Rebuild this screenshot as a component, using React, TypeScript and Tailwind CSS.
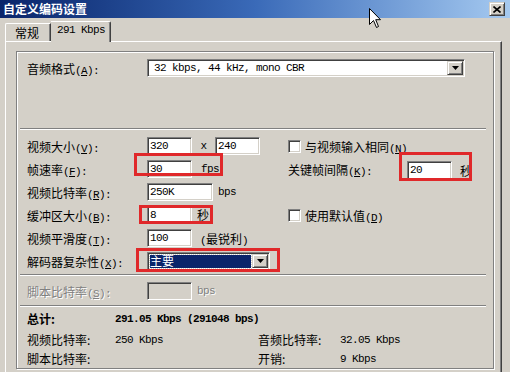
import React from 'react';

const ZH = "font-['Noto_Sans_CJK_SC',sans-serif] text-[12px]";
const EN = "font-['Liberation_Mono',monospace] text-[11px] tracking-[-0.6px]";
const SUNKEN =
  'border border-t-[#808080] border-l-[#808080] border-b-white border-r-white shadow-[inset_1px_1px_0_#404040,inset_-1px_-1px_0_#d4d0c8]';
const RAISED =
  'border border-t-[#d4d0c8] border-l-[#d4d0c8] border-b-[#404040] border-r-[#404040] shadow-[inset_1px_1px_0_white,inset_-1px_-1px_0_#808080]';

function Lbl({ zh, k, colon = true }: { zh: string; k: string; colon?: boolean }) {
  return (
    <span className="whitespace-nowrap">
      <span className={ZH}>{zh}</span>
      <span className={EN}>
        (<span className="underline">{k}</span>){colon ? ':' : ''}
      </span>
    </span>
  );
}

function Field({ value = '', className = '', disabled = false }: { value?: string; className?: string; disabled?: boolean }) {
  return (
    <div
      className={`${SUNKEN} ${disabled ? 'bg-[#d4d0c8]' : 'bg-white'} h-[18px] flex items-center pl-[2px] ${EN} text-black ${className}`}
    >
      {value}
    </div>
  );
}

function DropButton() {
  return (
    <div className={`${RAISED} bg-[#d4d0c8] w-[16px] h-[14px] flex items-center justify-center shrink-0`}>
      <svg width="7" height="4" viewBox="0 0 7 4">
        <path d="M0 0h7L3.5 4z" fill="black" />
      </svg>
    </div>
  );
}

function Check() {
  return <div className={`${SUNKEN} bg-white w-[13px] h-[13px] shrink-0`} />;
}

function Sep() {
  return <div className="ml-[3px] w-[466px] h-[2px] border-t border-t-[#808080] border-b border-b-white" />;
}

export default function App() {
  return (
    <div className="relative w-[510px] h-[372px] overflow-hidden bg-[#d4d0c8] text-black flex flex-col">
      {/* title bar */}
      <div className="h-[18px] shrink-0 bg-gradient-to-r from-[#0a246a] via-[#3a6ab8] to-[#a6caf0] flex items-center justify-between pl-[3px] pr-[5px]">
        <span className={`${ZH} font-bold text-white leading-none`}>自定义编码设置</span>
        <div className={`${RAISED} bg-[#d4d0c8] w-[16px] h-[14px] flex items-center justify-center`}>
          <svg width="8" height="7" viewBox="0 0 8 7">
            <path d="M0.5 0.5L7.5 6.5M7.5 0.5L0.5 6.5" stroke="black" strokeWidth="1.6" />
          </svg>
        </div>
      </div>

      <div className="flex-1 flex flex-col pl-[5px] pr-[8px]">
        {/* tabs */}
        <div className="h-[23px] shrink-0 flex items-end">
          <div className="h-[18px] w-[46px] border-t border-l border-t-white border-l-white border-r border-r-[#404040] shadow-[inset_-1px_0_0_#808080] rounded-tl-[2px] pl-[9px] flex items-center">
            <span className={`${ZH} leading-none`}>常规</span>
          </div>
          <div className="relative z-10 -mb-[1px] h-[21px] w-[60px] bg-[#d4d0c8] border-t border-t-white border-r border-r-[#404040] shadow-[inset_-1px_0_0_#808080] rounded-tr-[2px] pl-[6px] pb-[3px] flex items-center">
            <span className={EN}>291 Kbps</span>
          </div>
        </div>

        {/* panel */}
        <div className="flex-1 border-t border-l border-t-white border-l-white border-r border-r-[#404040] shadow-[inset_-1px_0_0_#808080] pt-[9px] pl-[10px]">
          <div className="w-[478px] h-[318px] border border-[#808080] shadow-[inset_1px_1px_0_white,1px_1px_0_white] flex flex-col pt-[7px]">
            {/* audio format */}
            <div className="h-[18px] flex items-center pl-[10px]">
              <div className="w-[120px]">
                <Lbl zh="音频格式" k="A" />
              </div>
              <div className={`${SUNKEN} bg-white w-[318px] h-[18px] flex items-center justify-between pl-[6px] pr-[1px]`}>
                <span className={EN}>32 kbps, 44 kHz, mono CBR</span>
                <DropButton />
              </div>
            </div>

            <div className="mt-[51px]">
              <Sep />
            </div>

            {/* video */}
            <div className="mt-[4px] flex flex-col gap-[5px] pl-[10px]">
              <div className="h-[18px] grid grid-cols-[120px_141px_1fr] items-center">
                <Lbl zh="视频大小" k="V" />
                <div className="flex items-center">
                  <Field value="320" className="w-[45px]" />
                  <span className={`${EN} w-[23px] text-center`}>x</span>
                  <Field value="240" className="w-[45px]" />
                </div>
                <div className="flex items-center gap-[4px]">
                  <Check />
                  <Lbl zh="与视频输入相同" k="N" colon={false} />
                </div>
              </div>

              <div className="h-[18px] grid grid-cols-[120px_141px_1fr] items-center">
                <Lbl zh="帧速率" k="F" />
                <div className="flex items-center">
                  <Field value="30" className="w-[45px]" />
                  <span className={`${EN} ml-[9px]`}>fps</span>
                </div>
                <div className="flex items-center">
                  <div className="w-[119px]">
                    <Lbl zh="关键帧间隔" k="K" />
                  </div>
                  <Field value="20" className="w-[45px] h-[20px] mt-[3px]" />
                  <span className={`${ZH} ml-[8px] mt-[3px]`}>秒</span>
                </div>
              </div>

              <div className="h-[18px] grid grid-cols-[120px_141px_1fr] items-center">
                <Lbl zh="视频比特率" k="R" />
                <div className="flex items-center">
                  <Field value="250K" className="w-[66px]" />
                  <span className={`${EN} ml-[5px]`}>bps</span>
                </div>
                <div />
              </div>

              <div className="h-[18px] grid grid-cols-[120px_141px_1fr] items-center">
                <Lbl zh="缓冲区大小" k="B" />
                <div className="flex items-center">
                  <Field value="8" className="w-[45px]" />
                  <span className={`${ZH} ml-[5px]`}>秒</span>
                </div>
                <div className="flex items-center gap-[4px]">
                  <Check />
                  <Lbl zh="使用默认值" k="D" colon={false} />
                </div>
              </div>

              <div className="h-[18px] grid grid-cols-[120px_141px_1fr] items-center">
                <Lbl zh="视频平滑度" k="T" />
                <div className="flex items-center">
                  <Field value="100" className="w-[45px]" />
                  <span className="ml-[8px]">
                    <span className={EN}>(</span>
                    <span className={ZH}>最锐利</span>
                    <span className={EN}>)</span>
                  </span>
                </div>
                <div />
              </div>

              <div className="h-[18px] grid grid-cols-[120px_141px_1fr] items-center">
                <Lbl zh="解码器复杂性" k="X" />
                <div className={`${SUNKEN} bg-white w-[123px] h-[19px] flex items-center pl-[2px] pr-[1px]`}>
                  <div className="w-[101px] h-[13px] bg-[#0a246a] outline outline-1 outline-dotted outline-[#d4d0c8] flex items-center">
                    <span className={`${ZH} text-white leading-none`}>主要</span>
                  </div>
                  <div className="flex-1" />
                  <DropButton />
                </div>
                <div />
              </div>
            </div>

            <div className="mt-[7px]">
              <Sep />
            </div>

            {/* script bitrate (disabled) */}
            <div className="mt-[6px] h-[18px] flex items-center pl-[10px] text-[#808080] [text-shadow:1px_1px_0_white]">
              <div className="w-[120px]">
                <Lbl zh="脚本比特率" k="S" />
              </div>
              <Field disabled className="w-[45px]" />
              <span className={`${EN} ml-[5px]`}>bps</span>
            </div>

            <div className="mt-[5px]">
              <Sep />
            </div>

            {/* summary */}
            <div className="mt-[3px] pl-[10px] flex flex-col">
              <div className="h-[16px] grid grid-cols-[88px_1fr] items-center">
                <span className={`${ZH} font-bold`}>总计:</span>
                <span className={`${EN} font-bold tracking-[-0.3px]`}>291.05 Kbps (291048 bps)</span>
              </div>
              <div className="mt-[5px] h-[16px] grid grid-cols-[88px_143px_82px_1fr] items-center">
                <span className={ZH}>视频比特率:</span>
                <span className={EN}>250 Kbps</span>
                <span className={ZH}>音频比特率:</span>
                <span className={EN}>32.05 Kbps</span>
              </div>
              <div className="mt-[3px] h-[16px] grid grid-cols-[88px_143px_82px_1fr] items-center">
                <span className={ZH}>脚本比特率:</span>
                <span />
                <span className={ZH}>开销:</span>
                <span className={EN}>9 Kbps</span>
              </div>
            </div>
          </div>
        </div>
      </div>

      {/* red annotation boxes */}
      <div className="absolute left-[134px] top-[153px] w-[89px] h-[23px] border-[3px] border-[#e0282a] pointer-events-none" />
      <div className="absolute left-[399px] top-[152px] w-[73px] h-[29px] border-[3px] border-[#e0282a] pointer-events-none" />
      <div className="absolute left-[139px] top-[205px] w-[74px] h-[19px] border-[3px] border-[#e0282a] pointer-events-none" />
      <div className="absolute left-[136px] top-[248px] w-[144px] h-[24px] border-[3px] border-[#e0282a] pointer-events-none" />

      {/* mouse cursor */}
      <svg className="absolute left-[369px] top-[8px]" width="13" height="21" viewBox="0 0 13 21">
        <path d="M0.5 0.5V16.5L4.5 12.5L7.5 19.5L9.5 18.5L6.7 11.7H11.5Z" fill="white" stroke="black" strokeWidth="1" strokeLinejoin="miter" />
      </svg>
    </div>
  );
}
